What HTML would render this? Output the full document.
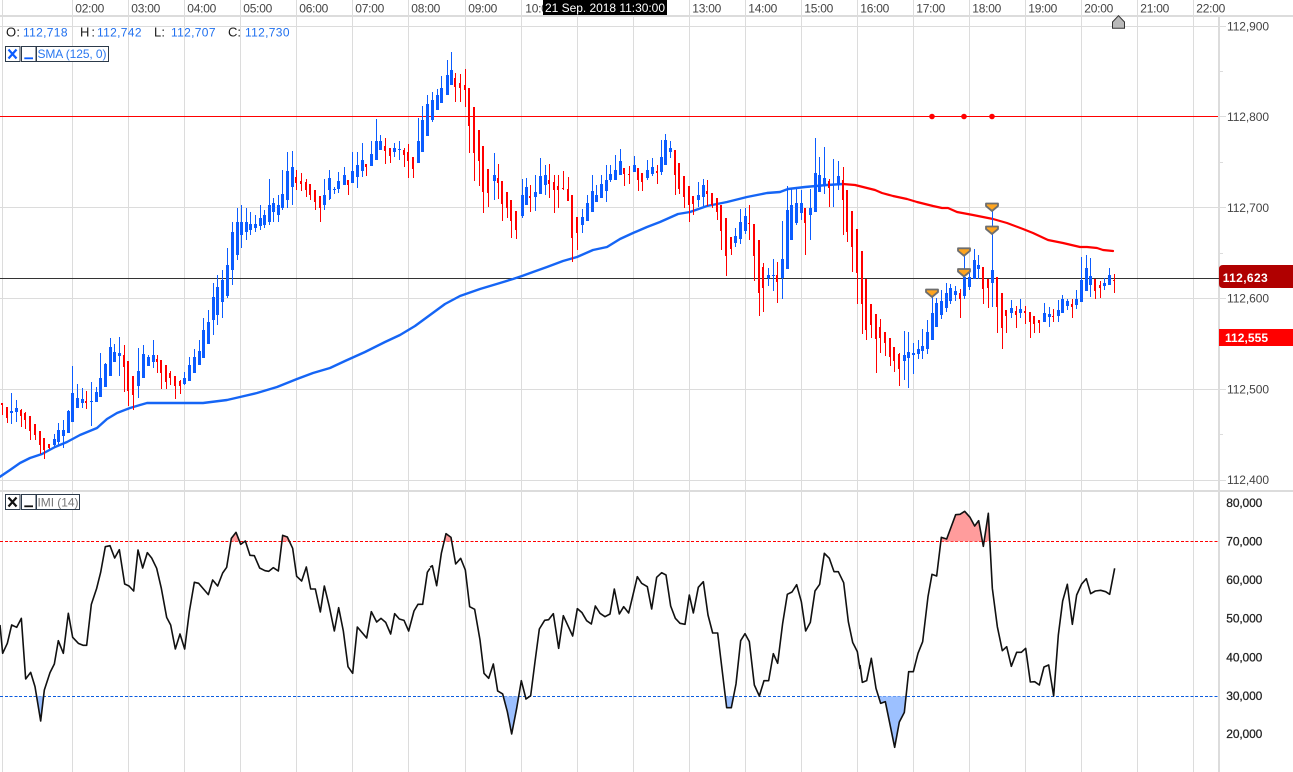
<!DOCTYPE html>
<html><head><meta charset="utf-8"><title>Chart</title>
<style>
html,body{margin:0;padding:0;background:#fff;width:1293px;height:772px;overflow:hidden}
svg{display:block}
text{font-family:"Liberation Sans",Arial,sans-serif;font-size:12px}
</style></head><body>
<svg width="1293" height="772" viewBox="0 0 1293 772" xmlns="http://www.w3.org/2000/svg">
<rect width="1293" height="772" fill="#fff"/>
<!-- grid -->
<g shape-rendering="crispEdges" fill="none">
<path stroke="#dcdcdc" stroke-width="1" d="M2.5 0V772M72.5 0V772M128.5 0V772M184.5 0V772M240.5 0V772M296.5 0V772M352.5 0V772M408.5 0V772M465.5 0V772M521.5 0V772M577.5 0V772M633.5 0V772M689.5 0V772M745.5 0V772M801.5 0V772M857.5 0V772M913.5 0V772M969.5 0V772M1025.5 0V772M1081.5 0V772M1137.5 0V772M1193.5 0V772"/>
<path stroke="#dcdcdc" stroke-width="1" d="M0 26.5H1226M1218 116.5H1226M0 207.5H1226M0 298.5H1226M0 389.5H1226M0 480.5H1226M1220 71.5H1223M1220 162.5H1223M1220 253.5H1223M1220 343.5H1223M1220 434.5H1223"/>
<rect x="0" y="15" width="1293" height="2" fill="#dcdcdc"/>
<rect x="0" y="490" width="1293" height="2" fill="#dcdcdc"/>
<rect x="1218" y="17" width="2" height="755" fill="#dcdcdc"/>
<path stroke="#ff0000" d="M0 116.5H1218"/>
<path stroke="#333" d="M0 278.5H1219"/>
</g>
<!-- time labels -->
<g fill="#444">
<text x="75.3" y="12.5" textLength="29">02:00</text>
<text x="131.3" y="12.5" textLength="29">03:00</text>
<text x="187.3" y="12.5" textLength="29">04:00</text>
<text x="243.3" y="12.5" textLength="29">05:00</text>
<text x="299.3" y="12.5" textLength="29">06:00</text>
<text x="355.3" y="12.5" textLength="29">07:00</text>
<text x="411.3" y="12.5" textLength="29">08:00</text>
<text x="468.3" y="12.5" textLength="29">09:00</text>
<text x="525.3" y="12.5" textLength="29">10:00</text>
<text x="692.3" y="12.5" textLength="29">13:00</text>
<text x="748.3" y="12.5" textLength="29">14:00</text>
<text x="804.3" y="12.5" textLength="29">15:00</text>
<text x="860.3" y="12.5" textLength="29">16:00</text>
<text x="916.3" y="12.5" textLength="29">17:00</text>
<text x="972.3" y="12.5" textLength="29">18:00</text>
<text x="1028.3" y="12.5" textLength="29">19:00</text>
<text x="1084.3" y="12.5" textLength="29">20:00</text>
<text x="1140.3" y="12.5" textLength="29">21:00</text>
<text x="1196.3" y="12.5" textLength="29">22:00</text>
</g>
<rect x="543" y="0" width="124" height="15" fill="#000"/>
<text x="545" y="12" fill="#fff" textLength="120">21 Sep. 2018 11:30:00</text>
<!-- SMA -->
<g fill="none" stroke-linejoin="round" stroke-linecap="round">
<path stroke="#1565f5" stroke-width="2.4" d="M0 476.7L10 470 20 463 30 458 42 454 55 447 67 442 80 435 97 428 107 419 117 413 130 408 140 405 147 403 163 403 203 403 227 400 240 397 257 393 277 387 297 379 313 373 330 368 345 361 365 352 385 342 400 335 415 326 430 315 445 304 460 296 480 289 500 283 513 279 522 276 533 272 547 267 563 261 577 257 593 250 607 247 620 239 633 233 647 227 660 222 678 214 690 212 707 206 727 202 747 197 752 196 767 193 780 192 788 189 805 187 827 185 843 184"/>
<path stroke="#ff0000" stroke-width="2.2" d="M843 184L855 185 863 187 875 190 882 193 893 196 907 199 917 202 933 206 942 208 948 208 957 212 973 215 993 219 1007 223 1023 229 1033 233 1048 240 1063 243 1080 247 1087 247 1097 248 1103 250 1113 251"/>
</g>
<!-- candles -->
<g fill="none" shape-rendering="crispEdges">
<path stroke="#ff0000" stroke-width="1" d="M2.5 403V415M7.5 407V423M21.5 409V427M25.5 412V429M30.5 416V440M35.5 424V440M40.5 431V454M44.5 438V459M49.5 444V449M86.5 391V409M124.5 345V392M128.5 361V406M133.5 376V410M157.5 355V373M161.5 360V389M166.5 365V389M170.5 371V385M175.5 376V399M180.5 380V394M296.5 170V190M301.5 173V191M306.5 179V197M310.5 184V200M315.5 190V210M320.5 196V222M348.5 180V195M366.5 164V176M385.5 138V164M390.5 148V163M404.5 148V167M408.5 144V178M413.5 157V178M455.5 73V102M460.5 74V102M465.5 69V107M469.5 88V153M474.5 107V181M479.5 130V186M483.5 146V213M488.5 169V207M498.5 164V199M502.5 181V221M507.5 192V218M511.5 200V238M516.5 211V239M530.5 185V212M549.5 164V198M554.5 175V213M558.5 175V208M563.5 171V190M568.5 177V201M572.5 195V262M577.5 217V250M624.5 168V186M629.5 166V184M638.5 168V191M642.5 173V191M657.5 165V184M675.5 150V195M679.5 163V194M684.5 176V208M689.5 186V222M693.5 196V215M707.5 180V206M712.5 193V208M717.5 198V220M721.5 205V250M726.5 218V276M731.5 237V255M749.5 205V240M754.5 224V281M759.5 240V316M763.5 263V312M777.5 262V303M805.5 208V255M829.5 179V207M843.5 167V235M847.5 190V242M852.5 211V272M857.5 229V304M862.5 251V334M866.5 279V340M871.5 304V338M876.5 314V373M880.5 319V353M885.5 332V356M890.5 338V366M894.5 347V372M899.5 353V386M960.5 289V318M983.5 267V304M988.5 279V308M997.5 277V333M1002.5 293V349M1006.5 310V333M1016.5 306V328M1025.5 306V324M1030.5 312V338M1034.5 316V333M1039.5 320V333M1053.5 309V322M1072.5 299V318M1095.5 279V299M1100.5 281V298M1114.5 274V293"/>
<path transform="translate(-.5 0)" stroke="#ff0000" stroke-width="2" d="M2.5 403V405M7.5 407V418M21.5 410V416M25.5 413V420M30.5 416V431M35.5 424V435M40.5 431V445M44.5 438V450M49.5 444V448M86.5 401V403M124.5 355V367M128.5 361V391M133.5 376V395M157.5 359V362M161.5 360V373M166.5 365V382M170.5 373V378M175.5 376V386M180.5 381V386M296.5 177V183M301.5 181V184M306.5 182V190M310.5 184V195M315.5 190V202M320.5 196V208M348.5 180V185M366.5 164V167M385.5 146V151M390.5 148V156M404.5 150V155M408.5 152V161M413.5 157V169M455.5 78V87M460.5 83V88M465.5 85V90M469.5 88V126M474.5 107V153M479.5 130V161M483.5 146V192M488.5 169V193M498.5 178V183M502.5 181V204M507.5 192V208M511.5 200V221M516.5 211V230M530.5 196V198M549.5 180V184M554.5 182V190M558.5 186V190M563.5 188V189M568.5 189V201M572.5 195V238M577.5 217V233M624.5 168V174M629.5 174V175M638.5 168V180M642.5 173V182M657.5 171V173M675.5 150V175M679.5 163V189M684.5 176V197M689.5 186V205M693.5 196V204M707.5 191V194M712.5 193V205M717.5 198V212M721.5 205V231M726.5 218V256M731.5 237V249M749.5 223V224M754.5 224V256M759.5 240V293M763.5 267V288M777.5 275V282M805.5 208V223M829.5 181V188M843.5 180V200M847.5 190V232M852.5 211V247M857.5 229V273M862.5 251V304M866.5 279V330M871.5 304V325M876.5 314V339M880.5 327V338M885.5 332V343M890.5 338V357M894.5 347V361M899.5 354V369M960.5 293V299M983.5 267V289M988.5 279V288M997.5 277V307M1002.5 293V328M1006.5 310V316M1016.5 311V315M1025.5 311V313M1030.5 312V322M1034.5 316V324M1039.5 320V323M1053.5 316V317M1072.5 304V307M1095.5 279V291M1100.5 285V288M1114.5 280V281"/>
<path stroke="#0b5cff" stroke-width="1" d="M11.5 393V424M16.5 400V422M54.5 434V447M58.5 423V445M63.5 420V448M68.5 410V433M72.5 366V422M77.5 384V408M82.5 388V408M91.5 382V426M96.5 387V402M100.5 353V397M105.5 363V387M110.5 338V376M114.5 344V362M119.5 337V376M138.5 348V398M143.5 345V378M148.5 355V366M153.5 340V368M184.5 372V385M189.5 357V381M194.5 349V373M199.5 340V365M203.5 318V358M208.5 310V344M213.5 283V335M217.5 275V325M222.5 270V318M227.5 248V298M232.5 222V285M237.5 208V260M241.5 205V248M246.5 208V240M250.5 212V235M255.5 215V232M260.5 205V230M264.5 210V228M269.5 179V225M273.5 198V222M278.5 195V222M282.5 170V210M287.5 152V208M292.5 151V205M324.5 179V210M329.5 170V200M330.5 180V199M334.5 187V194M338.5 172V193M344.5 167V185M352.5 152V183M357.5 152V188M362.5 143V177M371.5 141V166M376.5 119V160M380.5 135V150M394.5 143V157M399.5 141V160M418.5 118V163M422.5 106V152M427.5 95V136M432.5 92V122M437.5 89V110M441.5 76V103M447.5 60V95M451.5 52V85M494.5 153V200M522.5 179V218M526.5 178V205M535.5 175V211M540.5 158V194M545.5 165V195M582.5 209V233M587.5 195V221M592.5 175V212M596.5 185V202M601.5 175V198M606.5 165V202M610.5 165V182M615.5 155V180M620.5 149V175M634.5 156V172M647.5 160V180M652.5 158V176M661.5 140V175M665.5 134V165M670.5 141V158M698.5 182V207M703.5 179V206M735.5 228V247M740.5 209V244M745.5 208V234M768.5 268V286M773.5 259V291M782.5 221V299M787.5 186V269M791.5 189V240M796.5 189V225M801.5 190V220M810.5 189V240M815.5 138V212M819.5 157V192M824.5 147V194M833.5 159V207M838.5 161V190M904.5 331V380M908.5 332V388M913.5 343V374M918.5 340V359M922.5 329V359M927.5 320V354M932.5 297V340M936.5 298V327M941.5 290V319M946.5 283V312M950.5 284V304M955.5 286V301M964.5 255V299M969.5 273V290M974.5 249V279M978.5 255V279M992.5 205V307M1011.5 300V318M1020.5 299V318M1044.5 303V322M1049.5 307V327M1058.5 300V322M1062.5 295V313M1067.5 299V310M1076.5 290V309M1081.5 257V302M1086.5 255V291M1090.5 258V297M1104.5 278V290M1109.5 268V285"/>
<path stroke="#0b5cff" stroke-width="3" d="M11.5 411V413M16.5 408V412M54.5 439V445M58.5 430V442M63.5 430V436M68.5 411V433M72.5 393V422M77.5 398V408M82.5 399V403M91.5 401V402M96.5 392V402M100.5 378V397M105.5 364V387M110.5 347V376M114.5 352V362M119.5 353V356M138.5 371V386M143.5 354V378M148.5 357V366M153.5 355V362M184.5 378V384M189.5 365V381M194.5 357V373M199.5 351V365M203.5 330V358M208.5 322V344M213.5 297V320M217.5 287V315M222.5 280V302M227.5 265V296M232.5 232V270M237.5 222V255M241.5 222V235M246.5 222V232M250.5 224V230M255.5 224V228M260.5 218V226M264.5 215V225M269.5 205V222M273.5 203V212M278.5 205V215M282.5 194V208M287.5 171V200M292.5 167V187M324.5 195V205M329.5 178V190M334.5 189V190M338.5 181V189M344.5 175V185M352.5 171V183M357.5 165V177M362.5 160V171M371.5 154V166M376.5 141V160M380.5 141V150M394.5 148V152M399.5 149V150M418.5 141V163M422.5 120V152M427.5 104V136M432.5 100V120M437.5 95V110M441.5 88V103M447.5 75V95M451.5 70V85M494.5 175V181M522.5 195V216M526.5 187V205M535.5 192V197M540.5 176V194M545.5 175V185M582.5 217V225M587.5 203V221M592.5 191V212M596.5 195V202M601.5 184V198M606.5 180V191M610.5 174V180M615.5 170V180M620.5 161V175M634.5 165V172M647.5 170V178M652.5 167V174M661.5 157V172M665.5 140V165M670.5 148V152M698.5 195V200M703.5 185V197M735.5 236V243M740.5 222V239M745.5 216V231M768.5 275V278M773.5 275V276M782.5 259V278M787.5 210V269M791.5 205V240M796.5 203V223M801.5 203V213M810.5 208V215M815.5 173V212M819.5 175V192M824.5 178V186M833.5 184V185M838.5 176V185M904.5 355V361M908.5 352V358M913.5 353V355M918.5 349V354M922.5 346V351M927.5 332V349M932.5 313V340M936.5 303V327M941.5 301V315M946.5 293V308M950.5 288V301M955.5 291V295M964.5 277V296M969.5 277V287M974.5 260V279M978.5 265V269M992.5 270V283M1011.5 308V313M1020.5 309V313M1044.5 313V322M1049.5 314V317M1058.5 310V316M1062.5 299V313M1067.5 301V306M1076.5 299V305M1081.5 280V302M1086.5 268V291M1090.5 276V285M1104.5 283V286M1109.5 275V285"/>
</g>
<!-- red dots -->
<circle cx="932" cy="116.5" r="2.8" fill="#f00"/><circle cx="964" cy="116.5" r="2.8" fill="#f00"/><circle cx="992" cy="116.5" r="2.8" fill="#f00"/>
<!-- orange markers -->
<g fill="#ffa51f" stroke="#6e6e6e" stroke-width="1.8" stroke-linejoin="round">
<path d="M926 289.5H938V292L932 297 926 292Z"/>
<path d="M958 248.3H970V250.8L964 255.8 958 250.8Z"/>
<path d="M958 269H970V271.5L964 276.5 958 271.5Z"/>
<path d="M986 203.5H998V206L992 211 986 206Z"/>
<path d="M986 226.5H998V229L992 234 986 229Z"/>
</g>
<!-- top marker -->
<path d="M1118.5 15.7L1124.5 22V28.3H1112.5V22Z" fill="#b9b9b9" stroke="#333" stroke-width="1"/>
<!-- axis labels -->
<g fill="#444">
<text x="1227" y="30.5" textLength="42">112,900</text>
<text x="1227" y="121" textLength="42">112,800</text>
<text x="1227" y="212" textLength="42">112,700</text>
<text x="1227" y="302.5" textLength="42">112,600</text>
<text x="1227" y="393.5" textLength="42">112,500</text>
<text x="1227" y="484" textLength="42">112,400</text>
</g>
<path d="M1223 265H1293V288H1223Q1219 288 1219 284V269Q1219 265 1223 265Z" fill="#b00000"/>
<text x="1222.7" y="282" fill="#fff" style="font-weight:bold" textLength="45">112,623</text>
<rect x="1219" y="329" width="74" height="17" fill="#f00"/>
<text x="1225" y="342" fill="#fff" style="font-weight:bold" textLength="43">112,555</text>
<!-- OHLC -->
<g>
<text x="6" y="36.5" fill="#1a1a1a" style="font-size:13px" textLength="14">O:</text><text x="23" y="36.5" fill="#1f6fef" textLength="44.5">112,718</text>
<text x="80" y="36.5" fill="#1a1a1a" style="font-size:13px" textLength="15">H:</text><text x="97" y="36.5" fill="#1f6fef" textLength="44.5">112,742</text>
<text x="154" y="36.5" fill="#1a1a1a" style="font-size:13px" textLength="11">L:</text><text x="171" y="36.5" fill="#1f6fef" textLength="44.5">112,707</text>
<text x="228" y="36.5" fill="#1a1a1a" style="font-size:13px" textLength="13">C:</text><text x="245" y="36.5" fill="#1f6fef" textLength="44.5">112,730</text>
</g>
<!-- legend SMA -->
<g shape-rendering="crispEdges" fill="#fff" stroke="#2c3a4a" stroke-width="1">
<rect x="5.5" y="46.5" width="14.5" height="15"/><rect x="21.5" y="46.5" width="14.5" height="15"/><rect x="36.5" y="46.5" width="72" height="15"/>
<rect x="5.5" y="494.5" width="14.5" height="15"/><rect x="21.5" y="494.5" width="14.5" height="15"/><rect x="36.5" y="494.5" width="43" height="15"/>
</g>
<path d="M8.5 49.5L16.5 58.5M16.5 49.5L8.5 58.5" stroke="#0b5cff" stroke-width="2.2" fill="none"/>
<rect x="24.3" y="57.4" width="8.7" height="1.8" fill="#0b5cff"/>
<text x="37.5" y="58" fill="#2a78f0" textLength="69">SMA (125, 0)</text>
<path d="M8.5 497.5L16.5 506.5M16.5 497.5L8.5 506.5" stroke="#111" stroke-width="2.2" fill="none"/>
<rect x="24.3" y="505.4" width="8.7" height="1.8" fill="#111"/>
<text x="37.5" y="506.5" fill="#777" textLength="41">IMI (14)</text>
<!-- IMI dashed -->
<g fill="none" stroke-width="1" shape-rendering="crispEdges" stroke-dasharray="3 1.8">
<path stroke="#f00" d="M0 541.5H1219"/>
<path stroke="#0b5cdf" d="M0 696.5H1219"/>
</g>
<!-- IMI lower labels -->
<g fill="#222" stroke="#222" stroke-width=".25">
<text x="1226.3" y="507" textLength="36">80,000</text>
<text x="1226.3" y="545.5" textLength="36">70,000</text>
<text x="1226.3" y="584" textLength="36">60,000</text>
<text x="1226.3" y="622.5" textLength="36">50,000</text>
<text x="1226.3" y="661.5" textLength="36">40,000</text>
<text x="1226.3" y="700" textLength="36">30,000</text>
<text x="1226.3" y="738" textLength="36">20,000</text>
</g>
<!-- IMI panels (coords in 3x) -->
<g transform="translate(0 485) scale(.33333)" stroke-linejoin="round" fill="none">
<path fill="#ff9c9c" d="M692 169L694 160 708 142 718 169ZM845 169L848 151 862 156 870 169Z"/>
<path fill="#9cc0ff" d="M110 634L122 708 131 634Z"/>
<path stroke="#111" stroke-width="4.8" d="M0 420L8 505 22 475 35 420 50 427 64 400 77 582 92 562 105 605 122 708 133 615 150 563 163 537 175 467 190 505 205 385 218 457 235 475 250 481 260 481 274 358 290 310 302 262 316 185 330 182 344 219 358 194 374 297 387 303 401 318 414 195 428 249 442 203 455 219 470 250 484 310 500 397 512 420 526 492 540 447 554 492 568 380 583 292 596 295 625 329 638 285 653 303 668 264 680 247 694 160 708 142 722 178 736 168 750 211 763 212 779 249 795 257 806 259 820 248 835 258 848 151 862 156 878 190 890 274 905 288 919 246 932 312 946 312 961 381 973 303 988 365 1003 438 1016 368 1030 438 1044 545 1058 565 1072 426 1100 459 1114 380 1130 411 1143 400 1157 412 1172 447 1184 386 1198 402 1212 406 1226 438 1242 378 1254 358 1268 358 1282 262 1290 250"/>
</g>
<g transform="translate(430 485) scale(.33333)" stroke-linejoin="round" fill="none">
<path fill="#ff9c9c" d="M44 169L48 146 63 157 66 169Z"/>
<path fill="#9cc0ff" d="M222 634L232 680 245 747 260 670 266 634ZM885 634L890 668 904 668 910 634Z"/>
<path stroke="#111" stroke-width="4.8" d="M0 247L7 242 20 302 34 205 48 146 63 157 77 237 92 220 106 255 119 365 134 373 150 465 162 565 176 580 190 537 203 618 218 627 232 680 245 747 260 670 274 587 288 642 302 632 315 530 328 432 344 406 356 404 370 386 386 490 400 392 428 453 442 371 456 383 470 407 484 417 496 363 510 385 525 395 540 387 553 312 568 387 581 365 596 384 622 275 635 295 652 305 665 372 680 277 695 263 708 270 722 363 736 400 750 415 765 418 778 330 790 384 805 307 820 290 834 390 848 444 863 444 890 668 904 668 918 597 932 467 945 446 958 470 973 600 988 633 1002 587 1016 587 1030 506 1043 535 1058 415 1072 328 1086 321 1100 299 1114 350 1127 438 1141 412 1155 318 1169 298 1183 205 1198 220 1212 260 1225 260 1241 293 1255 410 1268 472 1282 500 1290 552"/>
</g>
<g transform="translate(860 485) scale(.33333)" stroke-linejoin="round" fill="none">
<path fill="#ff9c9c" d="M243 169L244 157 260 162 287 89 300 88 314 79 330 97 344 123 356 107 366 169ZM373 169L385 85 389 169Z"/>
<path fill="#9cc0ff" d="M55 634L62 655 76 650 104 787 118 711 133 682 140 634Z"/>
<path stroke="#111" stroke-width="4.8" d="M0 540L7 592 20 587 34 520 48 610 62 655 76 650 104 787 118 711 133 682 146 560 160 560 174 505 188 470 204 335 216 268 230 273 244 157 260 162 287 89 300 88 314 79 330 97 344 123 356 107 370 184 385 85 397 310 412 425 427 497 440 485 454 544 470 502 484 502 497 490 511 591 524 590 538 600 552 546 566 540 581 633 595 450 608 348 622 298 637 418 650 330 665 297 679 281 692 326 706 318 722 316 737 320 749 328 764 250"/>
</g>
</svg>
</body></html>
